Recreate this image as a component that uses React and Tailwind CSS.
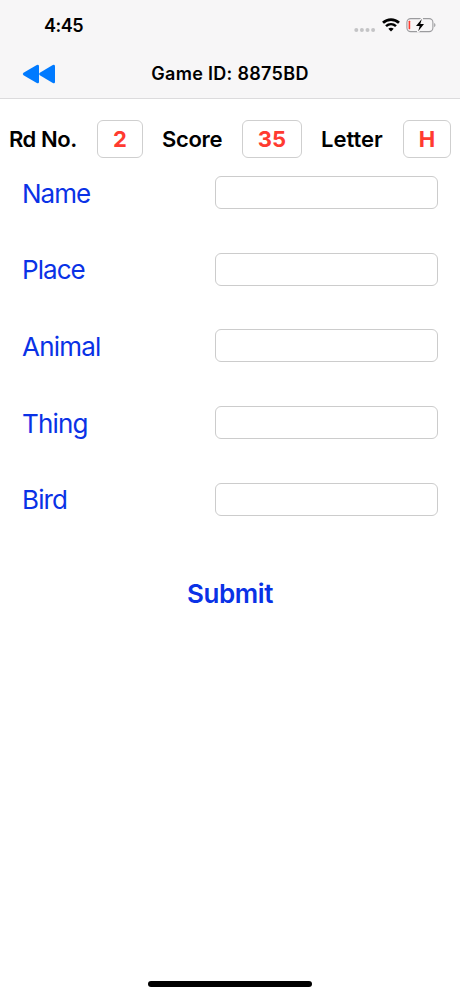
import React, { useState } from 'react';
import clsx from 'clsx';

const stats = [
  { label: 'Rd No.', value: '2', labelClass: 'w-[88px] tracking-[-0.45px]', boxClass: 'w-[46px]' },
  { label: 'Score', value: '35', labelClass: 'ml-[19px] w-20 tracking-[-0.3px]', boxClass: 'w-[60px]' },
  { label: 'Letter', value: 'H', labelClass: 'ml-[19px] w-[82px] tracking-[0px]', boxClass: 'w-12' },
];

const fields = [
  { label: 'Name', tracking: 'tracking-[-1px]' },
  { label: 'Place', tracking: 'tracking-[-0.95px]' },
  { label: 'Animal', tracking: 'tracking-[-0.8px]' },
  { label: 'Thing', tracking: 'tracking-[-0.8px]' },
  { label: 'Bird', tracking: 'tracking-[-0.85px]' },
];

const StatusBar = () => (
  <div className="flex h-[50px] items-center justify-between pl-11 pr-6">
    <span className="mt-[2px] text-[18px] font-semibold leading-none tracking-[-0.45px]">4:45</span>
    <div className="flex items-center">
      <svg width="22" height="6" viewBox="0 0 22 6" className="mt-[9px]" fill="#c4c4c6">
        <circle cx="2.3" cy="3" r="2" />
        <circle cx="7.9" cy="3" r="2" />
        <circle cx="13.5" cy="3" r="2" />
        <circle cx="19.1" cy="3" r="2" />
      </svg>
      <svg width="18" height="14" viewBox="0 0 18 14" className="ml-[6px]">
        <path d="M1 4.8C5.5.5 12.5.5 17 4.8" fill="none" stroke="#000" strokeWidth="2.7" />
        <path d="M4 8.2C6.9 5.5 11.1 5.5 14 8.2" fill="none" stroke="#000" strokeWidth="2.5" />
        <path d="M6.3 10.8C7.9 9.3 10.1 9.3 11.7 10.8L9 13.5Z" fill="#000" />
      </svg>
      <svg width="30" height="16" viewBox="0 0 30 16" className="ml-[6px]">
        <rect x="0.9" y="1.6" width="26" height="13" rx="3.8" fill="none" stroke="#9b9b9e" strokeWidth="1.1" />
        <path d="M28.2 6v4.2c1.7-.7 1.7-3.5 0-4.2Z" fill="#9b9b9e" />
        <rect x="2.6" y="3.8" width="1.6" height="8.5" rx="0.5" fill="#ff3b30" />
        <path
          d="M15.8 2 10 9h3.7l-1.5 5.3L18 7h-3.7Z"
          fill="#000"
          stroke="#f7f6f7"
          strokeWidth="2.6"
          strokeLinejoin="round"
          paintOrder="stroke"
        />
      </svg>
    </div>
  </div>
);

const NavBar = () => (
  <div className="grid h-12 grid-cols-[60px_1fr_60px] items-center">
    <button aria-label="Back" className="ml-[22px]">
      <svg width="34" height="20" viewBox="0 0 34 20" fill="#007aff">
        <path d="M1.5 8.8 14.8 1Q17 0 17 2.2v15.6Q17 20 14.8 19L1.5 11.2Q0 10 1.5 8.8Z" />
        <path d="M17.8 8.8 30.8 1Q33 0 33 2.2v15.6Q33 20 30.8 19l-13-7.8Q16.3 10 17.8 8.8Z" />
      </svg>
    </button>
    <h1 className="text-center text-[18px] font-semibold leading-none tracking-[0.3px]">Game ID: 8875BD</h1>
  </div>
);

const App = () => {
  const [answers, setAnswers] = useState({});

  return (
    <div className="flex h-[996px] w-[460px] flex-col bg-white font-['Inter',sans-serif] text-black">
      <header className="border-b border-[#dcdbdd] bg-[#f7f6f7]">
        <StatusBar />
        <NavBar />
      </header>

      <div className="mt-[21px] flex h-[38px] items-center pl-[9px]">
        {stats.map((stat) => (
          <React.Fragment key={stat.label}>
            <span className={clsx('whitespace-nowrap text-[22px] font-semibold leading-none', stat.labelClass)}>
              {stat.label}
            </span>
            <span
              className={clsx(
                'flex h-[38px] items-center justify-center rounded-md border border-[#cfcfcf] text-[22px] font-bold leading-none text-[#ff3b30]',
                stat.boxClass
              )}
            >
              {stat.value}
            </span>
          </React.Fragment>
        ))}
      </div>

      <form className="flex flex-col" onSubmit={(e) => e.preventDefault()}>
        <div className="mt-[18px] flex flex-col gap-[43.7px] pl-[22px] pr-[22px]">
          {fields.map((field) => (
            <label key={field.label} className="flex h-[33px] items-center justify-between">
              <span className={clsx('pt-[2px] text-[26px] leading-none text-[#0a32e6]', field.tracking)}>
                {field.label}
              </span>
              <input
                type="text"
                value={answers[field.label] || ''}
                onChange={(e) => setAnswers({ ...answers, [field.label]: e.target.value })}
                className="h-[33px] w-[223px] rounded-md border border-[#cccccc] px-2 text-lg"
              />
            </label>
          ))}
        </div>
        <button
          type="submit"
          className="mt-[62px] self-center text-[26px] font-semibold leading-8 tracking-[-0.4px] text-[#0a32e6]"
        >
          Submit
        </button>
      </form>

      <div className="mb-[9px] mt-auto h-[6px] w-[164px] self-center rounded-full bg-black" />
    </div>
  );
};

export default App;
